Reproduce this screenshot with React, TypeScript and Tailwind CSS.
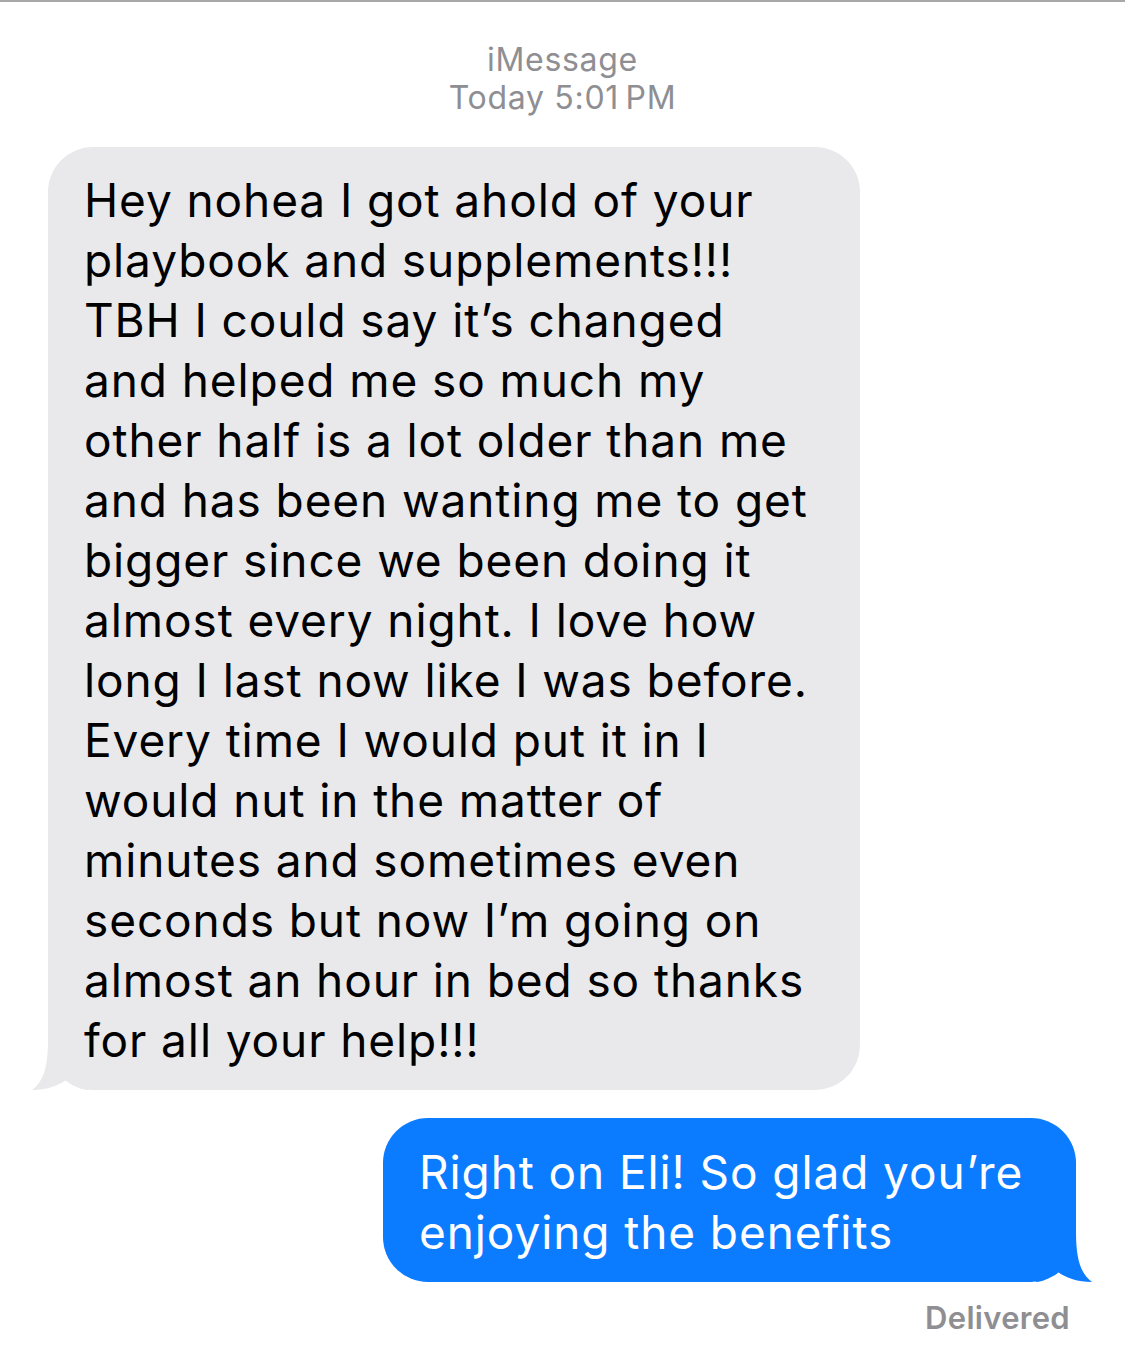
import React from "react";

const grayLines = [
  "Hey nohea I got ahold of your",
  "playbook and supplements!!!",
  "TBH I could say it\u2019s changed",
  "and helped me so much my",
  "other half is a lot older than me",
  "and has been wanting me to get",
  "bigger since we been doing it",
  "almost every night. I love how",
  "long I last now like I was before.",
  "Every time I would put it in I",
  "would nut in the matter of",
  "minutes and sometimes even",
  "seconds but now I\u2019m going on",
  "almost an hour in bed so thanks",
  "for all your help!!!",
];

const blueLines = ["Right on Eli! So glad you\u2019re", "enjoying the benefits"];

function Tail({ color, flip }: { color: string; flip?: boolean }) {
  return (
    <svg
      width="60"
      height="50"
      viewBox="0 0 60 50"
      className={flip ? "absolute -right-[20px] bottom-0 -scale-x-100" : "absolute -left-[20px] bottom-0"}
    >
      <path
        d="M20 0 C20 28 15 42 4 50 C18 50 30 46 38 40 C46 46 54 50 60 50 L60 0 Z"
        fill={color}
      />
    </svg>
  );
}

export default function App() {
  return (
    <div
      className="w-[1125px] h-[1363px] bg-white border-t-2 border-[#a8a8a8] overflow-hidden"
      style={{ fontFamily: "Inter, 'Noto Sans', sans-serif" }}
    >
      <div className="pt-[39px] flex flex-col items-center text-[#8e8e93] text-[32px] leading-[38px] tracking-[0.7px]">
        <div>iMessage</div>
        <div>Today 5:01&#8239;PM</div>
      </div>

      <div className="mt-[30px] ml-[48px] w-[812px] relative">
        <div className="relative z-10 bg-[#e9e9eb] rounded-[45px] pl-[36px] pt-[23px] pb-[20px] text-black text-[46px] leading-[60px] tracking-[0.9px]">
          {grayLines.map((l, i) => (
            <div key={i} className="whitespace-nowrap">
              {l}
            </div>
          ))}
        </div>
        <Tail color="#e9e9eb" />
      </div>

      <div className="mt-[28px] ml-auto mr-[49px] w-[693px] relative">
        <div className="relative z-10 bg-[#0b7bff] rounded-[45px] pl-[36px] pt-[24px] pb-[20px] text-white text-[46px] leading-[60px] tracking-[0.9px]">
          {blueLines.map((l, i) => (
            <div key={i} className="whitespace-nowrap">
              {l}
            </div>
          ))}
        </div>
        <Tail color="#0b7bff" flip />
      </div>

      <div className="mt-[19px] pr-[55px] text-right text-[#8e8e93] text-[31px] leading-[34px] font-semibold tracking-[0.3px]">
        Delivered
      </div>
    </div>
  );
}
